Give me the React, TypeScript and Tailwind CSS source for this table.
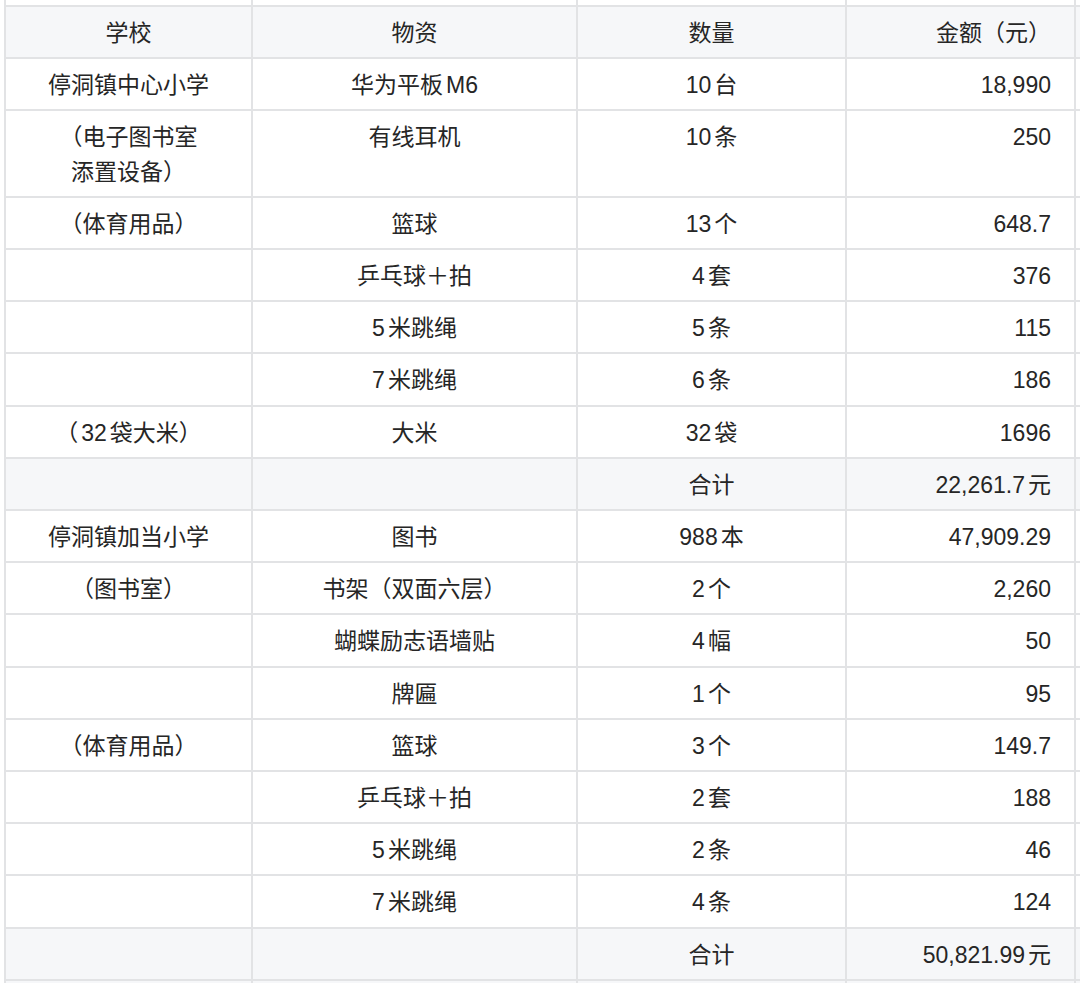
import React from 'react';

type Row = { cells: [React.ReactNode, string, string, string]; total?: boolean };

const rows: Row[] = [
  { cells: ['停洞镇中心小学', '华为平板M6', '10台', '18,990'] },
  {
    cells: [
      <>
        （电子图书室
        <br />
        添置设备）
      </>,
      '有线耳机',
      '10条',
      '250',
    ],
  },
  { cells: ['（体育用品）', '篮球', '13个', '648.7'] },
  { cells: ['', '乒乓球＋拍', '4套', '376'] },
  { cells: ['', '5米跳绳', '5条', '115'] },
  { cells: ['', '7米跳绳', '6条', '186'] },
  { cells: ['（32袋大米）', '大米', '32袋', '1696'] },
  { cells: ['', '', '合计', '22,261.7元'], total: true },
  { cells: ['停洞镇加当小学', '图书', '988本', '47,909.29'] },
  { cells: ['（图书室）', '书架（双面六层）', '2个', '2,260'] },
  { cells: ['', '蝴蝶励志语墙贴', '4幅', '50'] },
  { cells: ['', '牌匾', '1个', '95'] },
  { cells: ['（体育用品）', '篮球', '3个', '149.7'] },
  { cells: ['', '乒乓球＋拍', '2套', '188'] },
  { cells: ['', '5米跳绳', '2条', '46'] },
  { cells: ['', '7米跳绳', '4条', '124'] },
  { cells: ['', '', '合计', '50,821.99元'], total: true },
];

// adds the little gap that shows between latin digits and CJK characters
function spaced(text: React.ReactNode) {
  if (typeof text !== 'string') return text;
  const parts = text.split(/([0-9A-Za-z.,]+)/).filter((p) => p !== '');
  return parts.map((p, i) => {
    if (!/^[0-9A-Za-z.,]+$/.test(p)) return <span key={i}>{p}</span>;
    return (
      <span key={i} className={(i > 0 ? 'ml-[3px] ' : '') + (i < parts.length - 1 ? 'mr-[3px]' : '')}>
        {p}
      </span>
    );
  });
}

function Cell({ children, gray, right }: { children?: React.ReactNode; gray?: boolean; right?: boolean }) {
  return (
    <div
      className={
        'px-[23px] pt-[9px] pb-[7px] leading-[34.2px] ' +
        (gray ? 'bg-[#f6f7f9] ' : 'bg-white ') +
        (right ? 'text-right' : 'text-center')
      }
    >
      {spaced(children)}
    </div>
  );
}

export default function App() {
  return (
    <div
      className="w-[1080px] h-[983px] overflow-hidden bg-white text-[23px] text-[#262626]"
      style={{ fontFamily: '"Liberation Sans", "Noto Sans CJK SC", sans-serif' }}
    >
      <div className="ml-[4px] w-max grid grid-cols-[245px_323px_267px_227px_200px] gap-[2px] px-[2px] bg-[#e2e3e5]">
        {/* row cut off at the top */}
        <div className="h-[5px] bg-white" />
        <div className="h-[5px] bg-white" />
        <div className="h-[5px] bg-white" />
        <div className="h-[5px] bg-white" />
        <div className="h-[5px] bg-white" />

        <Cell gray>学校</Cell>
        <Cell gray>物资</Cell>
        <Cell gray>数量</Cell>
        <Cell gray right>金额（元）</Cell>
        <Cell gray />

        {rows.map((r, i) => (
          <React.Fragment key={i}>
            <Cell gray={r.total}>{r.cells[0]}</Cell>
            <Cell gray={r.total}>{r.cells[1]}</Cell>
            <Cell gray={r.total}>{r.cells[2]}</Cell>
            <Cell gray={r.total} right>
              {r.cells[3]}
            </Cell>
            <Cell gray={r.total} />
          </React.Fragment>
        ))}

        <Cell gray />
        <Cell gray />
        <Cell gray />
        <Cell gray right />
        <Cell gray />
      </div>
    </div>
  );
}
